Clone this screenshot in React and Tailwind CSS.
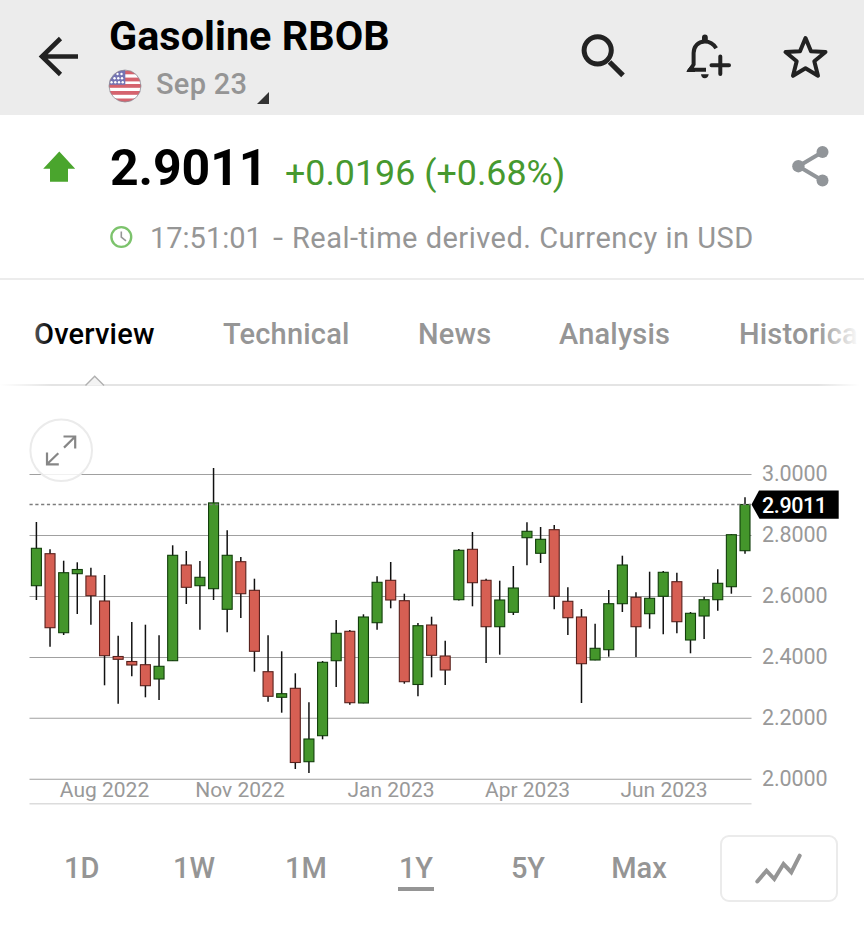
const TABS = [
  { label: 'Overview', style: 'w-[120px] text-black' },
  { label: 'Technical', style: 'w-[126px] ml-[69px]' },
  { label: 'News', style: 'w-[73px] ml-[69px]' },
  { label: 'Analysis', style: 'w-[111px] ml-[68px]' },
  { label: 'Historical', style: 'w-[130px] ml-[69px]' },
]

const RANGES = [
  { label: '1D', style: 'w-[35px]' },
  { label: '1W', style: 'w-[42px] ml-[74px]' },
  { label: '1M', style: 'w-[41px] ml-[70px]' },
  { label: '1Y', style: 'w-[36px] ml-[72px]', active: true },
  { label: '5Y', style: 'w-[36px] ml-[76px]' },
  { label: 'Max', style: 'w-[56px] ml-[65px]' },
]

const GRID = [
  { y: 88.5, label: '3.0000' },
  { y: 149.5, label: '2.8000' },
  { y: 210.5, label: '2.6000' },
  { y: 271.5, label: '2.4000' },
  { y: 332.3, label: '2.2000' },
  { y: 393.3, label: '2.0000' },
]

const MONTHS = [
  { x: 104.5, label: 'Aug 2022' },
  { x: 240, label: 'Nov 2022' },
  { x: 391, label: 'Jan 2023' },
  { x: 527.5, label: 'Apr 2023' },
  { x: 664, label: 'Jun 2023' },
]

// [direction, high, body top, body bottom, low]
const CANDLES = [
  ['up', 522, 548.3, 585.7, 600],
  ['down', 549.3, 553.7, 627.7, 646.7],
  ['up', 560.7, 572.7, 632.7, 635],
  ['up', 562.3, 569.5, 573.7, 614],
  ['down', 567.7, 576, 595.7, 624.7],
  ['down', 575, 601, 655.7, 685.3],
  ['down', 635.7, 656.5, 659.3, 703.7],
  ['down', 622, 661.5, 665, 676.3],
  ['down', 624.7, 664.7, 685.7, 697.3],
  ['up', 635.3, 666.3, 679, 700],
  ['up', 545.3, 555.3, 660.7, 661],
  ['down', 551, 565, 587.3, 604],
  ['up', 561, 577.3, 585.7, 629.7],
  ['up', 468, 502.9, 588.7, 600],
  ['up', 530.3, 555.3, 609.3, 632.3],
  ['down', 557, 561.7, 593.7, 618],
  ['down', 578.7, 590.3, 651.3, 671.7],
  ['down', 635.3, 671.7, 696.3, 701.7],
  ['up', 651.3, 693.7, 697.3, 712.7],
  ['down', 673.3, 688.3, 762.5, 769],
  ['up', 702.3, 739, 761.7, 773],
  ['up', 661, 662.3, 735.7, 739.3],
  ['up', 620, 633.3, 660.7, 687],
  ['down', 630, 631.3, 702.7, 704.7],
  ['up', 614.3, 617, 703, 703.3],
  ['up', 576.3, 582.3, 622.7, 629.7],
  ['down', 562, 580.3, 600, 608.3],
  ['down', 593.7, 600.7, 681.7, 683.7],
  ['up', 623, 625.7, 684.5, 696.3],
  ['down', 616.7, 625, 655.3, 677.3],
  ['down', 640.7, 656, 670, 685],
  ['up', 549, 550.3, 599.7, 600.5],
  ['down', 532, 549.3, 582.7, 606.3],
  ['down', 578.7, 580.3, 626.7, 663],
  ['up', 580.7, 600, 626.7, 654.7],
  ['up', 566, 588, 612.3, 615],
  ['up', 522.3, 531.3, 537.7, 565.3],
  ['up', 527, 539.3, 553.3, 563],
  ['down', 525, 529.7, 596.3, 609.3],
  ['down', 587.3, 601.3, 617.7, 635],
  ['down', 609, 617, 663.7, 703],
  ['up', 623.7, 648.3, 660, 660.3],
  ['up', 590, 603.7, 649.7, 656.7],
  ['up', 555.7, 565, 603.7, 612],
  ['down', 592.3, 597.3, 626.7, 657],
  ['up', 571.7, 598.3, 613.7, 628.7],
  ['up', 571, 572.3, 596.3, 634.3],
  ['down', 572.7, 581.7, 621.7, 633.3],
  ['up', 612, 613.3, 640, 653.3],
  ['up', 596.7, 599.7, 616, 639],
  ['up', 569.3, 583.3, 599.7, 610.7],
  ['up', 534, 534.7, 586.7, 593.7],
  ['up', 497.3, 504.5, 550.7, 553.7],
]

const FIRST_X = 36.4
const STEP_X = 13.627
const CHART_TOP = 386

function Flag() {
  return (
    <svg viewBox="0 0 34 34" className="w-[34px] h-[34px] shrink-0 -ml-px">
      <defs>
        <clipPath id="flag">
          <circle cx="17" cy="17" r="16" />
        </clipPath>
      </defs>
      <g clipPath="url(#flag)">
        <rect width="34" height="34" fill="#fff" />
        {[1.5, 8.6, 15, 22, 29.5].map((y) => (
          <rect key={y} x="0" y={y} width="34" height="3.8" fill="#d5636e" />
        ))}
        <rect x="0" y="0" width="17.3" height="15.8" fill="#7474b4" />
        {[
          [9.5, 5], [13.5, 5], [6.5, 9.2], [10.3, 9.2], [14, 9.2],
          [3.5, 13.2], [7.3, 13.2], [11, 13.2], [14.7, 13.2],
        ].map(([x, y]) => (
          <circle key={`${x}-${y}`} cx={x} cy={y} r="1.2" fill="#fff" />
        ))}
      </g>
      <circle cx="17" cy="17" r="16" fill="none" stroke="#8e8e98" strokeWidth="0.8" />
    </svg>
  )
}

function Header() {
  return (
    <header className="flex h-[115px] bg-[#ececec] text-[#222]">
      <svg viewBox="0 0 109 115" className="w-[109px] h-[115px] shrink-0" fill="none" stroke="currentColor" strokeWidth="4.6">
        <path d="M78 56.5H43M60.5 38.5L42 56.5L60.5 74.5" />
      </svg>
      <div className="flex-1 min-w-0">
        <h1 className="h-[68px] pt-[12px] text-[41.4px] leading-[48px] font-bold text-black whitespace-nowrap">
          Gasoline RBOB
        </h1>
        <div className="flex items-center">
          <Flag />
          <span className="ml-[14px] -mt-[3px] w-[92px] text-[29px] leading-[34px] font-medium tracking-[0.3px] text-[#959595] whitespace-nowrap">
            Sep 23
          </span>
          <svg viewBox="0 0 12 12" className="ml-[9px] mt-[24px] -mb-[1px] w-[12px] h-[12px]">
            <path d="M12 0V12H0Z" fill="#333" />
          </svg>
        </div>
      </div>
      <svg viewBox="570 0 294 115" className="w-[294px] h-[115px] shrink-0" fill="none" stroke="currentColor">
        <circle cx="597.7" cy="50.3" r="13.6" strokeWidth="5" />
        <path d="M609.5 62L623 75.3" strokeWidth="5.2" />

        <path d="M716.2 48.2C713.4 43.6 709.3 41.4 704.8 41.4C698 41.4 693.6 46.6 693.6 53V64.5L690 69.8H706" strokeWidth="4" />
        <path d="M702 41V37.4a2.9 2.9 0 0 1 5.8 0V41ZM687 72C687 68.5 690.5 67 692 64.5L695 69V72ZM701 74.3H708.7C708.3 77 706.8 78.3 704.8 78.3C702.6 78.3 701.3 77 701 74.3Z" fill="currentColor" stroke="none" />
        <path d="M720.3 56.5V74M711.5 65.2H729" strokeWidth="4" strokeLinecap="round" />

        <path
          d="M805.5 38L811 51.3L825.5 52L814.3 61.2L818 75.8L805.5 68.3L793 75.8L796.7 61.2L785.5 52L800 51.3Z"
          strokeWidth="4"
          strokeLinejoin="round"
        />
      </svg>
    </header>
  )
}

function Quote() {
  return (
    <section className="h-[165px] border-b-2 border-[#ececec]">
      <div className="flex h-[100px]">
        <svg viewBox="0 0 110 100" className="w-[110px] h-[100px] shrink-0">
          <path d="M59.3 36.5L75.2 53.7H68V66.7H50V53.7H43.2Z" fill="#4aa52d" />
        </svg>
        <span className="w-[175px] pt-[23px] text-[50px] leading-[60px] font-bold tracking-[-0.1px] text-black">2.9011</span>
        <span className="flex-1 pt-[36px] text-[35.8px] leading-[44px] text-[#46992f] whitespace-nowrap">+0.0196 (+0.68%)</span>
        <svg viewBox="780 115 84 100" className="w-[84px] h-[100px] shrink-0">
          <path d="M822.5 152L798.4 166.2L822.5 180.5" fill="none" stroke="#919599" strokeWidth="4" />
          <circle cx="822.5" cy="152" r="6" fill="#919599" />
          <circle cx="798.4" cy="166.2" r="6.2" fill="#919599" />
          <circle cx="822.5" cy="180.5" r="6" fill="#919599" />
        </svg>
      </div>
      <div className="flex items-center h-[46px] pl-[110px]">
        <svg viewBox="0 0 24 24" className="w-[24px] h-[24px] -mt-[2px] shrink-0" fill="none">
          <circle cx="11.3" cy="12" r="9.9" stroke="#7cc36c" strokeWidth="2.4" />
          <path d="M11.3 6.5V12L16 15.8" stroke="#969696" strokeWidth="1.6" />
        </svg>
        <div className="flex ml-[16px] text-[29px] leading-[36px] text-[#969696] whitespace-nowrap">
          <span className="w-[123px]">17:51:01</span>
          <span className="w-[19px] origin-left scale-x-125">-</span>
          <span className="tracking-[0.5px]">Real-time derived. Currency in USD</span>
        </div>
      </div>
    </section>
  )
}

function Tabs() {
  return (
    <nav className="relative h-[106px] overflow-hidden">
      <div className="flex pl-[34px] pt-[36px] text-[29px] leading-[36px] font-medium tracking-[0.2px] text-[#969696]">
        {TABS.map(({ label, style }) => (
          <span key={label} className={`shrink-0 whitespace-nowrap ${style}`}>{label}</span>
        ))}
      </div>
      <svg viewBox="0 0 864 12" className="block mt-[23px] w-full h-[12px]">
        <path d="M0 10H864" stroke="#e4e4e4" strokeWidth="2" />
        <path d="M85.5 10.5L94.7 1.2L104 10.5" fill="#f3f3f3" stroke="#b0b0b0" strokeWidth="1.4" />
      </svg>
      <div className="absolute inset-y-0 left-0 w-[52px] bg-gradient-to-r from-white to-transparent" />
      <div className="absolute inset-y-0 right-0 w-[46px] bg-gradient-to-l from-white from-10% to-transparent" />
    </nav>
  )
}

function Chart() {
  return (
    <svg viewBox="0 0 864 426" className="block w-full h-[426px]">
      {GRID.map(({ y, label }) => (
        <g key={label}>
          <path d={`M29.5 ${y}H751.5`} stroke="#a0a0a0" strokeWidth="1.1" />
          <text x="762" y={y + 6.8} fontSize="21.5" letterSpacing="-0.1" fill="#999">{label}</text>
        </g>
      ))}
      <path d="M29.5 417.8H751.5" stroke="#dcdcdc" strokeWidth="1.5" />
      {MONTHS.map(({ x, label }) => (
        <text key={label} x={x} y="411" fontSize="21" textAnchor="middle" fill="#999">{label}</text>
      ))}

      {CANDLES.map(([dir, high, top, bottom, low], i) => {
        const x = FIRST_X + i * STEP_X
        return (
          <g key={i} stroke={dir === 'up' ? '#123f0b' : '#58211d'}>
            <path d={`M${x} ${high - CHART_TOP}V${low - CHART_TOP}`} stroke="#111" strokeWidth="1.5" />
            <rect
              x={x - 5}
              y={top - CHART_TOP}
              width="10"
              height={bottom - top}
              fill={dir === 'up' ? '#44962b' : '#d65f53'}
              strokeWidth="1.1"
            />
          </g>
        )
      })}

      <path d="M29.5 118.5H751" stroke="#7c7c7c" strokeWidth="1.4" strokeDasharray="3.2 2.6" />
      <path d="M751.5 118.5L759 104.5H838.7V132.8H759.5Z" fill="#000" />
      <text x="762" y="127" fontSize="21.5" fontWeight="500" letterSpacing="-0.4" fill="#fff">2.9011</text>

      <circle cx="61.2" cy="64.3" r="30.8" fill="#fff" fillOpacity="0.85" stroke="#ebebeb" strokeWidth="2" />
      <g fill="none" stroke="#868686" strokeWidth="2.2">
        <path d="M63.5 50.5H75.2V62.5M75 50.7L64 61.6" />
        <path d="M58.8 78.3H47V66.5M47.2 78L58.3 67.3" />
      </g>
    </svg>
  )
}

function RangeBar() {
  return (
    <div className="flex h-[116px] pt-[23px] pl-[64px]">
      {RANGES.map(({ label, style, active }) => (
        <div key={label} className={`shrink-0 ${style}`}>
          <div className="pt-[15px] h-[52px] text-center text-[29px] leading-[36px] font-medium text-[#959595]">{label}</div>
          {active && <div className="h-[4px] bg-[#959595]" />}
        </div>
      ))}
      <button className="ml-[53px] w-[118px] h-[67px] shrink-0 rounded-[9px] border-2 border-[#ebebeb] bg-white">
        <svg viewBox="0 0 114 63" className="w-[114px] h-[63px]" fill="none">
          <path
            d="M35.3 44.5L44.5 33.7L52.3 42L61.5 27L69.3 35.2L77.7 18.7"
            stroke="#959595"
            strokeWidth="4"
            strokeLinecap="round"
          />
        </svg>
      </button>
    </div>
  )
}

export default function App() {
  return (
    <div className="w-[864px] h-[928px] overflow-hidden bg-white font-['Roboto',sans-serif]">
      <Header />
      <Quote />
      <Tabs />
      <Chart />
      <RangeBar />
    </div>
  )
}
